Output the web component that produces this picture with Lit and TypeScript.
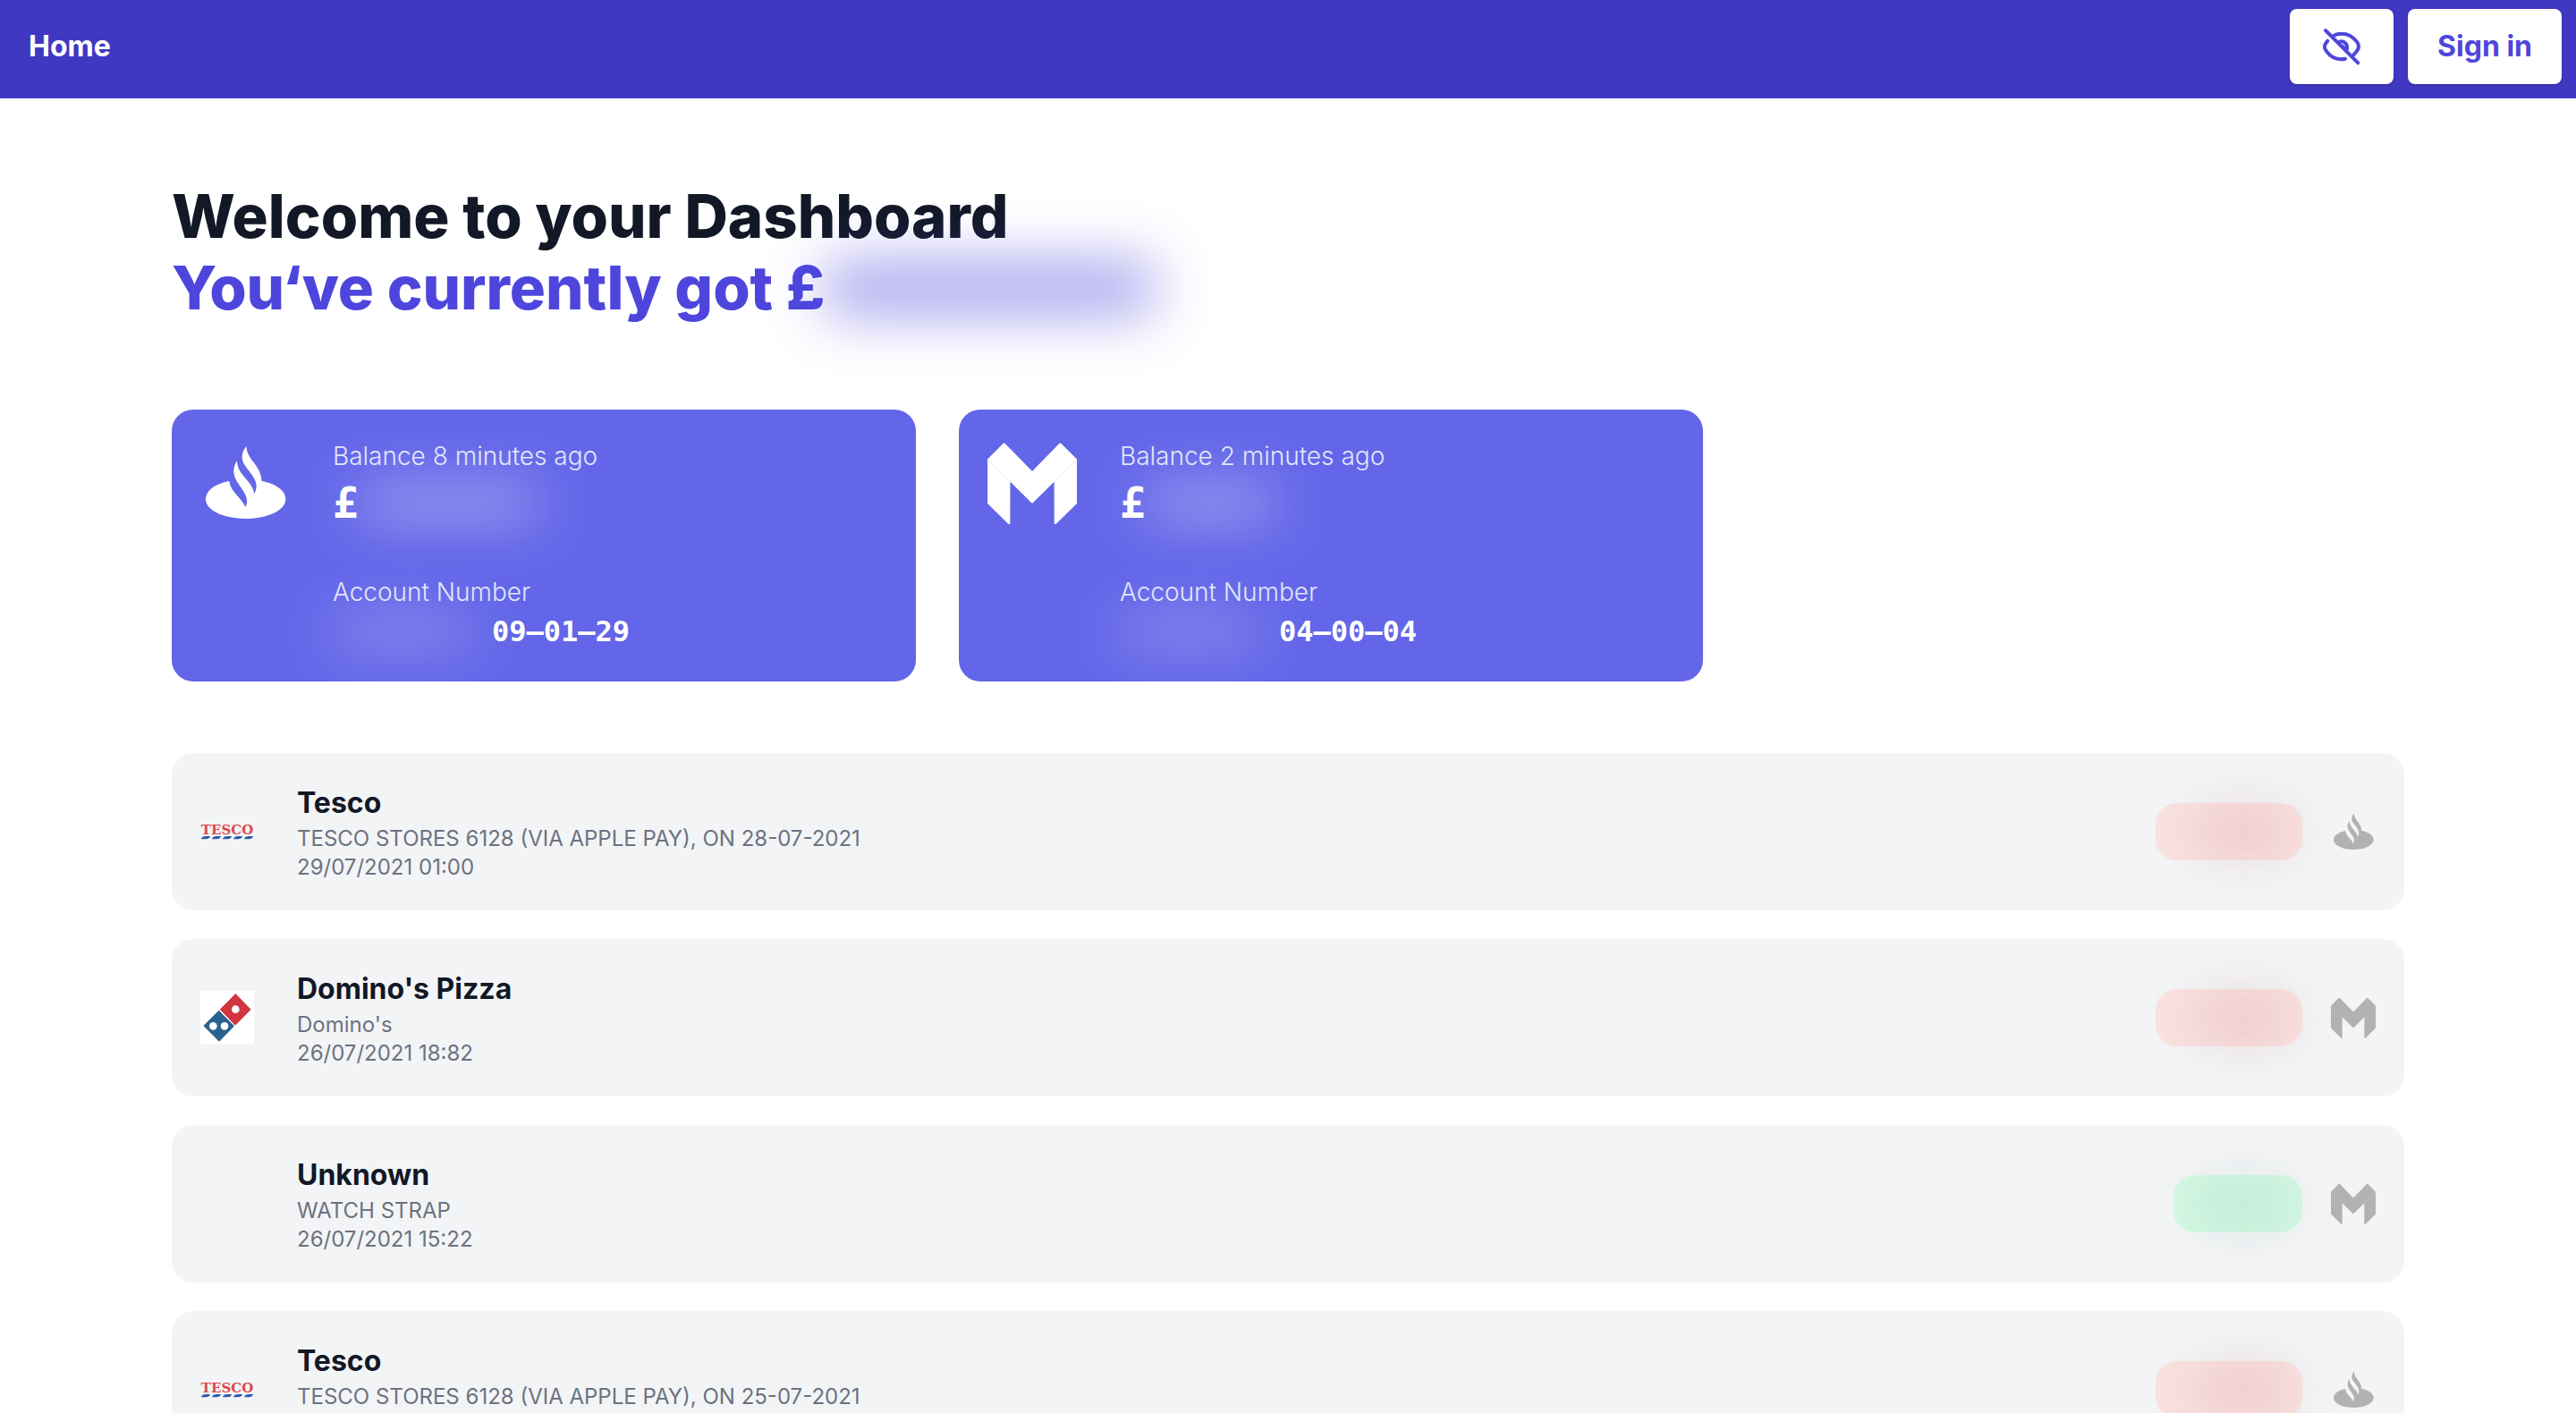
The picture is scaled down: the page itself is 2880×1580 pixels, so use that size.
import { LitElement, html, svg, css, nothing } from "lit";
import { customElement, property } from "lit/decorators.js";

type Bank = "santander" | "monzo";
type Merchant = "tesco" | "dominos" | "none";

interface Account {
  bank: Bank;
  updated: string;
  sortCode: string;
  amountWidth: number;
}

interface Transaction {
  merchant: Merchant;
  name: string;
  reference: string;
  date?: string;
  bank: Bank;
  kind: "debit" | "credit";
}

const accounts: Account[] = [
  { bank: "santander", updated: "Balance 8 minutes ago", sortCode: "09–01–29", amountWidth: 200 },
  { bank: "monzo", updated: "Balance 2 minutes ago", sortCode: "04–00–04", amountWidth: 144 },
];

const transactions: Transaction[] = [
  { merchant: "tesco", name: "Tesco", reference: "TESCO STORES 6128 (VIA APPLE PAY), ON 28-07-2021", date: "29/07/2021 01:00", bank: "santander", kind: "debit" },
  { merchant: "dominos", name: "Domino's Pizza", reference: "Domino's", date: "26/07/2021 18:82", bank: "monzo", kind: "debit" },
  { merchant: "none", name: "Unknown", reference: "WATCH STRAP", date: "26/07/2021 15:22", bank: "monzo", kind: "credit" },
  { merchant: "tesco", name: "Tesco", reference: "TESCO STORES 6128 (VIA APPLE PAY), ON 25-07-2021", bank: "santander", kind: "debit" },
];

@customElement("bank-logo")
export class BankLogo extends LitElement {
  @property() bank: Bank = "monzo";

  static styles = css`
    :host {
      display: block;
    }
    .logo {
      display: block;
      width: 100%;
      height: 100%;
      fill: currentColor;
    }
  `;

  render() {
    const shape =
      this.bank === "santander"
        ? svg`<path transform="translate(6 9)" d="M45.5 0C45.6 15 62 21 62.5 38.7C79 42 89.4 50 89.4 59C89.4 71.5 69.5 81 44.7 81C20 81 0 71.5 0 59C0 50 10 42 26.3 39C28 52 40 57 44.4 68C52 53 31.3 43 31.3 28C31.3 23 33 19 35 16.3C35.5 33 52 38 54.3 53C64 35 40.6 26 40.6 12C40.6 7 43 3 45.5 0Z"/>`
        : svg`<path d="M0 23.5L17.2 6.2Q18.6 5 20 6.2L50 37L80 6.2Q81.4 5 82.8 6.2L100 23.5L50 73Z"/>
            <path d="M0 23.4L25.4 48.5V94.6Q25.3 97 23.2 95.8L0 73Z"/>
            <path d="M100 23.4L74.6 48.5V94.6Q74.7 97 76.8 95.8L100 73Z"/>`;
    return html`<svg class="logo" viewBox="0 0 100 100" aria-hidden="true">${shape}</svg>`;
  }
}

@customElement("merchant-logo")
export class MerchantLogo extends LitElement {
  @property() merchant: Merchant = "none";

  static styles = css`
    :host {
      display: block;
      width: 60px;
      height: 60px;
      flex: none;
    }
    .logo {
      display: block;
      width: 60px;
      height: 60px;
    }
    .tesco {
      font: bold 15px "DejaVu Serif", serif;
      fill: #dc4a4e;
    }
  `;

  render() {
    if (this.merchant === "tesco") {
      return html`<svg class="logo" viewBox="0 0 60 60">
        <text class="tesco" x="30" y="33" text-anchor="middle">TESCO</text>
        ${[0, 1, 2, 3, 4].map(
          (i) => svg`<path fill="#2b5ca8" d="M${1 + i * 12} 38.3C${2 + i * 12} 35.5 ${3 + i * 12} 35 ${11 + i * 12} 35C${10 + i * 12} 38 ${9 + i * 12} 38.3 ${1 + i * 12} 38.3Z"/>`
        )}
      </svg>`;
    }
    if (this.merchant === "dominos") {
      return html`<svg class="logo" viewBox="0 0 180 180" role="img" aria-label="Domino's">
        <rect width="180" height="180" fill="#fff" />
        <path d="M118 12L167 62L117 113L68 62Z" fill="#d1353f" stroke="#d1353f" stroke-width="4" stroke-linejoin="round" />
        <path d="M62 68L111 118L63 167L13 117Z" fill="#2a628f" stroke="#2a628f" stroke-width="4" stroke-linejoin="round" />
        <circle cx="118" cy="62" r="13" fill="#fff" />
        <circle cx="43" cy="118" r="13" fill="#fff" />
        <circle cx="81" cy="118" r="13" fill="#fff" />
      </svg>`;
    }
    return nothing;
  }
}

@customElement("app-root")
export class AppRoot extends LitElement {
  static styles = css`
    :host {
      display: block;
      height: 100vh;
      overflow-y: auto;
      scrollbar-width: none;
      background: #fff;
      color: #121826;
      font-family: Inter, "Liberation Sans", sans-serif;
    }
    .bar {
      display: flex;
      align-items: center;
      gap: 16px;
      padding: 10px 16px 16px;
      background: #4038c2;
    }
    .home {
      margin-right: auto;
      padding: 0 16px;
      color: #fff;
      font-size: 32px;
      font-weight: 700;
      line-height: 48px;
      text-decoration: none;
    }
    .button {
      display: flex;
      align-items: center;
      justify-content: center;
      min-width: 116px;
      height: 84px;
      margin: 0;
      padding: 0 33px;
      border: 0;
      border-radius: 8px;
      background: #fff;
      box-shadow: 0 2px 4px rgba(0, 0, 0, 0.1);
      color: #4e46dc;
      font: inherit;
      font-size: 32px;
      font-weight: 700;
      line-height: 48px;
    }
    .eye {
      width: 48px;
      height: 48px;
      fill: none;
      stroke: currentColor;
      stroke-width: 12;
      stroke-linecap: round;
      stroke-linejoin: round;
    }
    .page {
      box-sizing: border-box;
      max-width: 2560px;
      margin: 0 auto;
      padding: 92px 32px 32px;
    }
    .title {
      margin: 0;
      font-size: 67px;
      font-weight: 800;
      line-height: 80px;
    }
    .line {
      display: flex;
      align-items: center;
    }
    .total {
      color: #4e46dc;
    }
    .hidden {
      display: block;
      flex: none;
      background: currentColor;
      filter: blur(32px);
    }
    .total .hidden {
      width: 368px;
      height: 60px;
      opacity: 0.5;
    }
    .accounts {
      display: flex;
      gap: 48px;
      margin-top: 96px;
    }
    .account {
      box-sizing: border-box;
      display: flex;
      gap: 48px;
      width: calc(100% / 3);
      padding: 32px;
      border-radius: 24px;
      background: #6366e8;
      color: #fff;
    }
    .account-logo {
      flex: none;
      width: 100px;
      height: 100px;
    }
    .label {
      margin: 0;
      color: #e0e5fc;
      font-size: 28px;
      font-weight: 300;
      line-height: 40px;
    }
    .amount {
      display: flex;
      align-items: center;
      margin: 0 0 48px;
      font-family: "DejaVu Sans Mono", monospace;
      font-size: 48px;
      font-weight: 700;
      line-height: 64px;
    }
    .amount .hidden {
      height: 34px;
      opacity: 0.48;
    }
    .numbers {
      display: flex;
      align-items: center;
      gap: 24px;
      margin: 0;
      font-family: "DejaVu Sans Mono", monospace;
      font-size: 32px;
      font-weight: 700;
      line-height: 48px;
    }
    .numbers .hidden {
      width: 154px;
      height: 24px;
      opacity: 0.44;
    }
    .list {
      display: flex;
      flex-direction: column;
      gap: 32px;
      margin: 80px 0 0;
      padding: 0;
      list-style: none;
    }
    .row {
      display: flex;
      align-items: center;
      padding: 32px;
      border-radius: 24px;
      background: #f3f4f6;
    }
    .details {
      flex: 1;
      min-height: 112px;
      margin-left: 48px;
    }
    .name {
      margin: 0;
      font-size: 32px;
      font-weight: 700;
      line-height: 48px;
    }
    .meta {
      margin: 0;
      color: #6c7280;
      font-size: 24px;
      line-height: 32px;
    }
    .pill {
      box-sizing: border-box;
      display: flex;
      align-items: center;
      justify-content: flex-end;
      height: 64px;
      padding: 0 16px;
      border-radius: 24px;
    }
    .pill .hidden {
      width: 100px;
      height: 24px;
      opacity: 0.3;
    }
    .debit {
      width: 164px;
      background: #f9e2e1;
      color: #991b1b;
    }
    .credit {
      width: 144px;
      background: #d4f8e4;
      color: #065f46;
    }
    .credit .hidden {
      opacity: 0.24;
    }
    .row-logo {
      flex: none;
      width: 50px;
      height: 50px;
      margin-left: 32px;
      color: #b2b2b2;
    }
  `;

  render() {
    return html`
      <nav class="bar">
        <a class="home" href="#">Home</a>
        <button class="button" type="button" aria-label="Toggle balances">
          <svg class="eye" viewBox="222 84 144 144" aria-hidden="true">
            <path d="M240 102L349 211" />
            <path d="M266 121C273 115 284 113 294 113C318 113 333 124 345 140C353 151 353 160 346 170C341 177 336 183 330 188" />
            <path d="M247 137C234 152 234 160 243 172C254 187 271 204 306 197" />
            <path d="M283 143C294 134 315 142 312 164" />
            <path d="M297 152L303 158" stroke-width="6" />
          </svg>
        </button>
        <button class="button" type="button">Sign in</button>
      </nav>
      <main class="page">
        <h1 class="title">
          <span class="line">Welcome to your Dashboard</span>
          <span class="line total">You‘ve currently got £<span class="hidden"></span></span>
        </h1>
        <section class="accounts">
          ${accounts.map(
            (a) => html`<article class="account">
              <bank-logo class="account-logo" .bank=${a.bank}></bank-logo>
              <div>
                <p class="label">${a.updated}</p>
                <p class="amount">£<span class="hidden" style="width:${a.amountWidth}px"></span></p>
                <p class="label">Account Number</p>
                <p class="numbers"><span class="hidden"></span><span>${a.sortCode}</span></p>
              </div>
            </article>`
          )}
        </section>
        <ul class="list">
          ${transactions.map(
            (t) => html`<li class="row">
              <merchant-logo .merchant=${t.merchant}></merchant-logo>
              <div class="details">
                <h2 class="name">${t.name}</h2>
                <p class="meta">${t.reference}</p>
                ${t.date ? html`<p class="meta">${t.date}</p>` : nothing}
              </div>
              <div class="pill ${t.kind}"><span class="hidden"></span></div>
              <bank-logo class="row-logo" .bank=${t.bank}></bank-logo>
            </li>`
          )}
        </ul>
      </main>
    `;
  }
}
